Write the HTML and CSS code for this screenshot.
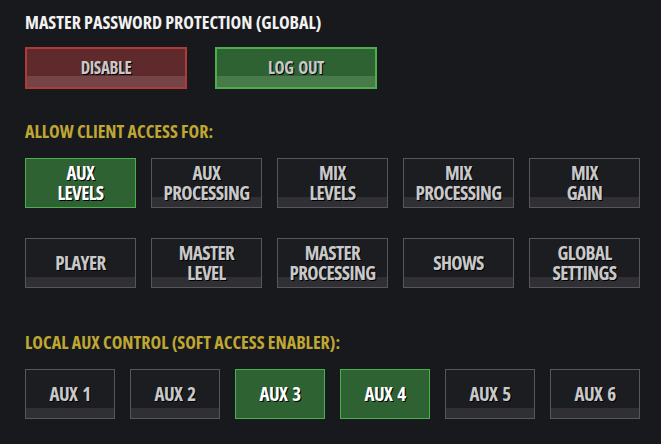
FILE: index.html
```html
<!DOCTYPE html>
<html lang="en">
<head>
    <meta charset="UTF-8">
    <meta name="viewport" content="width=device-width, initial-scale=1.0">
    <title>Access Settings</title>
    <link rel="stylesheet" href="styles.css">
</head>
<body>
    <div class="panel">
        <h2 class="titulo">MASTER PASSWORD PROTECTION (GLOBAL)</h2>
        <div class="linha-master">
            <button class="btn btn-big btn-red">DISABLE</button>
            <button class="btn btn-big btn-green">LOG OUT</button>
        </div>

        <h2 class="titulo amarelo">ALLOW CLIENT ACCESS FOR:</h2>
        <div class="grade-acesso">
            <button class="btn on">AUX<br>LEVELS</button>
            <button class="btn">AUX<br>PROCESSING</button>
            <button class="btn">MIX<br>LEVELS</button>
            <button class="btn">MIX<br>PROCESSING</button>
            <button class="btn">MIX<br>GAIN</button>
            <button class="btn">PLAYER</button>
            <button class="btn">MASTER<br>LEVEL</button>
            <button class="btn">MASTER<br>PROCESSING</button>
            <button class="btn">SHOWS</button>
            <button class="btn">GLOBAL<br>SETTINGS</button>
        </div>

        <h2 class="titulo amarelo secao-aux">LOCAL AUX CONTROL (SOFT ACCESS ENABLER):</h2>
        <div class="grade-aux">
            <button class="btn">AUX 1</button>
            <button class="btn">AUX 2</button>
            <button class="btn on">AUX 3</button>
            <button class="btn on">AUX 4</button>
            <button class="btn">AUX 5</button>
            <button class="btn">AUX 6</button>
        </div>
    </div>
</body>
</html>
```
FILE: styles.css
```css
* {
    margin: 0;
    padding: 0;
    box-sizing: border-box;
}

body {
    background-color: #18191d;
    font-family: 'Open Sans', 'DejaVu Sans Condensed', sans-serif;
    font-stretch: 75%;
    color: #fff;
}

.panel {
    padding: 11px 21px 0 25px;
}

.titulo {
    font-size: 18px;
    font-weight: 700;
    line-height: 22px;
    color: #f2f2f2;
}

.amarelo {
    color: #bfa733;
}

/* botões */
.btn {
    font-family: inherit;
    font-stretch: 75%;
    font-weight: 700;
    font-size: 19px;
    line-height: 20px;
    letter-spacing: -0.6px;
    word-spacing: 2px;
    color: #c9c9c9;
    text-shadow: 1px 1px 0 #000;
    background: linear-gradient(to bottom, #1c1d21 0, #1c1d21 calc(100% - 10px), #2f2f34 calc(100% - 10px));
    border: 1px solid #56575b;
    cursor: pointer;
}

.btn.on {
    background: #2e6232;
    border-color: #4cae4c;
    color: #fff;
}

.btn-big {
    width: 162px;
    height: 42px;
    border-width: 2px;
    font-size: 17px;
    letter-spacing: -0.4px;
}

.btn-red {
    background: linear-gradient(to bottom, #5e2a2c 0, #5e2a2c calc(100% - 11px), #744447 calc(100% - 11px));
    border-color: #b03a3a;
}

.btn-green {
    background: linear-gradient(to bottom, #2e6232 0, #2e6232 calc(100% - 11px), #497a4c calc(100% - 11px));
    border-color: #4cae4c;
}

.linha-master {
    display: flex;
    gap: 28px;
    margin-top: 14px;
    margin-bottom: 31px;
}

.grade-acesso {
    display: grid;
    grid-template-columns: repeat(5, 111px);
    grid-auto-rows: 50px;
    column-gap: 15px;
    row-gap: 30px;
    margin-top: 16px;
}

.secao-aux {
    margin-top: 43px;
}

.grade-aux {
    display: grid;
    grid-template-columns: repeat(6, 90px);
    grid-auto-rows: 50px;
    column-gap: 15px;
    margin-top: 16px;
}
```
